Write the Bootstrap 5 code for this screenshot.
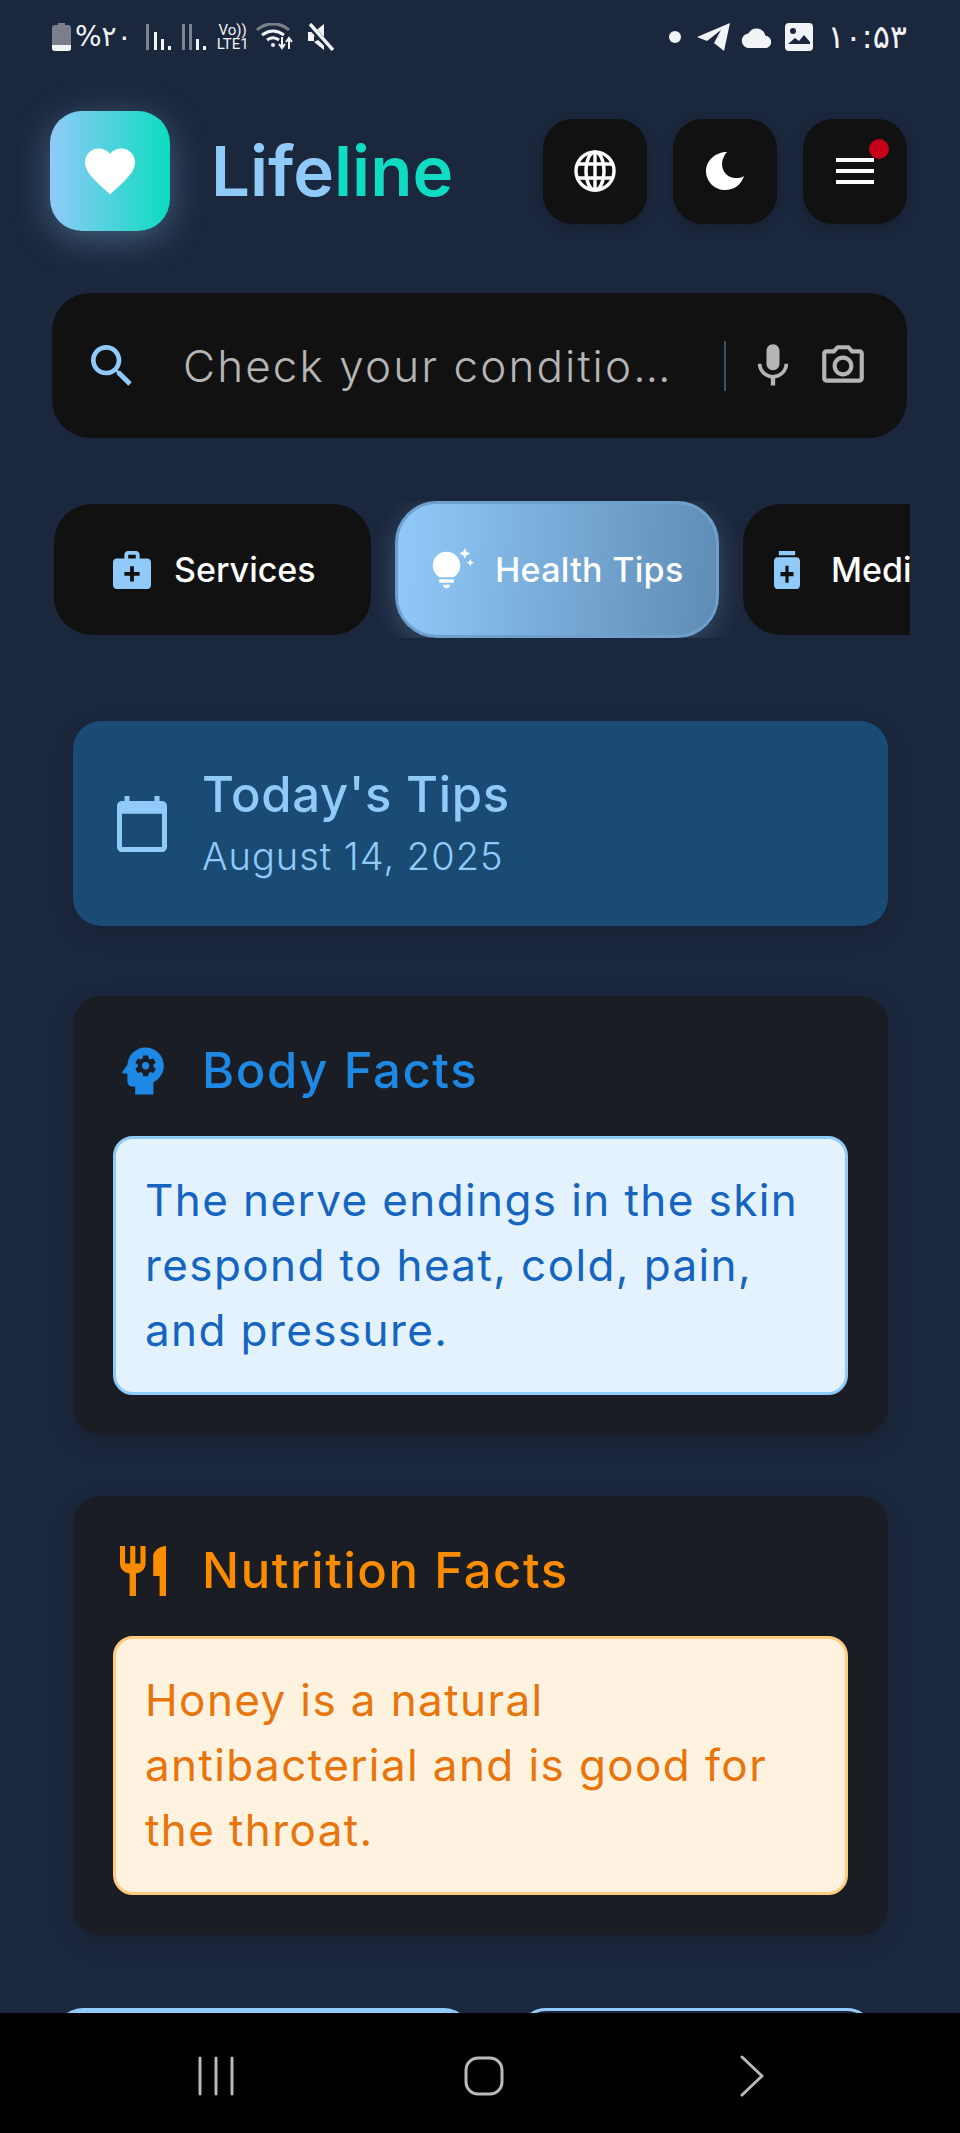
<!DOCTYPE html>
<html lang="en">
<head>
  <meta charset="UTF-8" />
  <title>Lifeline - Health Tips</title>
  <link href="https://cdn.jsdelivr.net/npm/bootstrap@5.3.0/dist/css/bootstrap.min.css" rel="stylesheet">
  <style>
    html, body { height: 100%; }
    body {
      background: #1b273d;
      font-family: Inter, "Liberation Sans", sans-serif;
      overflow: hidden;
    }
    svg { display: block; flex: none; }
    .app-shell { height: 100vh; }
    .app-main { min-height: 0; overflow: hidden; }

    .status-row { height: 30px; margin: 22px 53px 0 52px; color: #f1f3f6; }
    .status-num { font-family: "DejaVu Sans", "Noto Sans", sans-serif; font-size: 28px; line-height: 30px; white-space: nowrap; }
    .status-time { font-size: 32px; margin-left: 14px; }
    .status-pct { margin-left: 4px; }
    .status-lte { font-size: 15px; line-height: 14px; text-align: center; width: 36px; margin-left: 8px; font-family: Roboto, sans-serif; }
    .sig-one { margin-left: 14px; }
    .sig-two { margin-left: 11px; }
    .wifi-icon { margin-left: 5px; }
    .mute-icon { margin-left: 12px; }
    .plane-icon { margin-left: 16px; }
    .cloud-icon { margin-left: 10px; }
    .photo-icon { margin-left: 12px; }

    .top-row { margin: 59px 53px 0 50px; height: 120px; }
    .logo-box {
      width: 120px; height: 120px; border-radius: 32px;
      background: linear-gradient(90deg, #90caf9, #0cdcc0);
      box-shadow: 0 8px 36px rgba(144, 202, 249, .35);
    }
    .logo-text { font-size: 69px; font-weight: 600; line-height: 1; margin-left: 41px; color: #90caf9; }
    .logo-text span { color: #0fdcc2; }
    .tool-group { gap: 26px; }
    .round-tool {
      width: 104px; height: 105px; border: 0; border-radius: 30px; padding: 0;
      background: #111; box-shadow: 0 4px 14px rgba(0, 0, 0, .2);
    }
    .round-tool:hover, .round-tool:active { background: #111 !important; }
    .alert-dot { width: 20px; height: 20px; background: #c4001d; top: 20px; right: 18px; }

    .search-bar {
      margin: 62px 53px 0 52px; height: 145px; border-radius: 38px;
      background: #111; padding: 0 39px 0 32px;
    }
    .search-input {
      background: transparent !important; border: 0; box-shadow: none !important; padding: 0;
      min-width: 0; margin-left: 43px; font-size: 44px; color: #b5b5b5; letter-spacing: 2.1px; font-weight: 300;
    }
    .search-input::placeholder { color: #b5b5b5; opacity: 1; }
    .search-split { width: 2px; height: 50px; background: #3a5068; margin-right: 21px; flex: none; }
    .mic-icon { margin-right: 19px; }

    .tab-strip { margin: 63px 50px 0 52px; height: 137px; overflow: hidden; padding-left: 2px; gap: 24px; }
    .tab-item {
      height: 131px; border-radius: 38px; background: #111; color: #fff;
      font-size: 34px; font-weight: 500; flex: none; white-space: nowrap;
    }
    .tab-services { width: 317px; padding-left: 59px; gap: 23px; }
    .tab-tips {
      width: 324px; height: 137px; padding-left: 32px; gap: 21px; letter-spacing: .3px;
      background: linear-gradient(95deg, #90caf9, #5f8cb5);
      border: 3px solid #6f9fcc; border-radius: 42px;
      box-shadow: 0 6px 26px rgba(144, 202, 249, .25);
    }
    .tab-meds { width: 300px; padding-left: 31px; gap: 31px; }

    .today-card {
      margin: 83px 72px 0 73px; height: 205px; border-radius: 28px; border: 0;
      background: #1a4b75; color: #90caf9; padding: 0 44px;
      box-shadow: 0 8px 24px rgba(0, 0, 0, .12);
    }
    .today-icon { margin-right: 35px; }
    .today-title { font-size: 49px; font-weight: 500; line-height: 56px; letter-spacing: .75px; }
    .today-date { font-size: 38px; font-weight: 300; line-height: 50px; letter-spacing: 1px; margin-top: 8px; }

    .fact-card {
      margin: 0 72px 0 73px; height: 439px; border-radius: 28px; border: 0;
      background: #1a1d23; padding: 40px;
      box-shadow: 0 8px 24px rgba(0, 0, 0, .15);
    }
    .fact-card.fact-blue { margin-top: 70px; }
    .fact-card.fact-orange { margin-top: 61px; }
    .fact-head { height: 60px; margin-top: 5px; margin-bottom: 35px; font-size: 49px; font-weight: 500; letter-spacing: 1.6px; }
    .fact-icon { width: 59px; margin-right: 30px; }
    .fact-box {
      height: 259px; border-radius: 20px; border-width: 3px; border-style: solid;
      padding: 0 29px; font-size: 44px; line-height: 65px; letter-spacing: 1.4px;
    }
    .fact-blue .fact-head { color: #1e88e5; }
    .fact-blue .fact-box { background: #e3f2fd; border-color: #90caf9; color: #1565c0; }
    .fact-orange .fact-head { color: #fb8c00; }
    .fact-orange .fact-box { background: #fff3e0; border-color: #ffcc80; color: #e8750c; }

    .peek-row { margin: 73px 85px 0 55px; }
    .peek-btn { height: 120px; border-radius: 28px; flex: none; }
    .peek-fill { width: 417px; background: #90caf9; }
    .peek-line { width: 357px; border: 3px solid #90caf9; }

    .soft-bar { height: 120px; background: #000; flex: none; padding-top: 6px; padding-left: 8px; }
    .soft-slot { width: 268px; }
  </style>
</head>
<body>
  <div class="app-shell d-flex flex-column">
    <div class="app-main flex-grow-1">

      <!-- status bar -->
      <div class="status-row d-flex align-items-center justify-content-between">
        <div class="d-flex align-items-center">
          <svg width="19" height="28" viewBox="0 0 19 28"><path d="M6 0h7v2h3a3 3 0 0 1 3 3v20a3 3 0 0 1-3 3H3a3 3 0 0 1-3-3V5a3 3 0 0 1 3-3h3z" fill="#7b7f8b"/><path d="M0 22h19v3a3 3 0 0 1-3 3H3a3 3 0 0 1-3-3z" fill="#f4f5f7"/></svg>
          <span class="status-num status-pct">%۲۰</span>
          <svg class="sig-one" width="25" height="26" viewBox="0 0 25 26"><g fill="#f1f3f6"><rect x="0" y="0" width="3" height="26" opacity=".45"/><rect x="8" y="8" width="3" height="18"/><rect x="15" y="15" width="3" height="11"/><rect x="22" y="22" width="3" height="4"/></g></svg>
          <svg class="sig-two" width="25" height="26" viewBox="0 0 25 26"><g fill="#f1f3f6"><rect x="0" y="0" width="3" height="26" opacity=".45"/><rect x="7" y="0" width="3" height="26" opacity=".45"/><rect x="14" y="15" width="3" height="11"/><rect x="21" y="22" width="3" height="4"/></g></svg>
          <div class="status-lte">Vo))<br>LTE1</div>
          <svg class="wifi-icon" width="38" height="28" viewBox="0 0 38 28" fill="none"><path d="M1 7C10-1 24-1 33 7" stroke="#7b7f8b" stroke-width="3"/><path d="M6 12c7-5 15-5 22 0" stroke="#f1f3f6" stroke-width="3"/><path d="M11 17c4-3 8-3 12 0" stroke="#f1f3f6" stroke-width="3"/><circle cx="17" cy="22" r="2" fill="#f1f3f6"/><path d="M26 14v11m-3-4 3 4 3-4M33 26V15m-3 4 3-4 3 4" stroke="#f1f3f6" stroke-width="2"/></svg>
          <svg class="mute-icon" width="28" height="28" viewBox="0 0 28 28"><path d="M2 9h6l10-8v17z" fill="#f1f3f6"/><path d="M2 9h6v9H2z" fill="#f1f3f6"/><path d="M12 17l6 5v5l-10-8z" fill="#f1f3f6"/><path d="M3 2l23 25" stroke="#1b273d" stroke-width="6"/><path d="M4 1l23 26" stroke="#f1f3f6" stroke-width="3.4"/></svg>
        </div>
        <div class="d-flex align-items-center">
          <svg width="12" height="12" viewBox="0 0 12 12"><circle cx="6" cy="6" r="6" fill="#f1f3f6"/></svg>
          <svg class="plane-icon" width="33" height="28" viewBox="0 0 33 28"><path d="M0 14 33 0 27 28 17 20 24 7 10 18z" fill="#f1f3f6"/></svg>
          <svg class="cloud-icon" width="33" height="22" viewBox="0 2 24 18"><path fill="#f1f3f6" d="M19.35 10.04C18.67 6.59 15.64 4 12 4 9.11 4 6.6 5.64 5.35 8.04 2.34 8.36 0 10.91 0 14c0 3.31 2.69 6 6 6h13c2.76 0 5-2.24 5-5 0-2.64-2.05-4.78-4.65-4.96z"/></svg>
          <svg class="photo-icon" width="28" height="28" viewBox="0 0 28 28"><rect width="28" height="28" rx="4" fill="#f1f3f6"/><circle cx="8" cy="8" r="3" fill="#1b273d"/><path d="M3 21l7-6 4 3 5-6 6 7v2H3z" fill="#1b273d"/></svg>
          <span class="status-num status-time">۱۰:۵۳</span>
        </div>
      </div>

      <!-- logo + tools -->
      <div class="top-row d-flex align-items-center">
        <div class="logo-box d-flex align-items-center justify-content-center">
          <svg width="60" height="60" viewBox="0 0 24 24"><path fill="#fff" d="M12 21.35l-1.45-1.32C5.4 15.36 2 12.28 2 8.5 2 5.42 4.42 3 7.5 3c1.74 0 3.41.81 4.5 2.09C13.09 3.81 14.76 3 16.5 3 19.58 3 22 5.42 22 8.5c0 3.78-3.4 6.86-8.55 11.54L12 21.35z"/></svg>
        </div>
        <div class="logo-text">Life<span>line</span></div>
        <div class="tool-group d-flex ms-auto">
          <button class="btn round-tool d-flex align-items-center justify-content-center">
            <svg width="42" height="42" viewBox="0 0 42 42" fill="none" stroke="#fff" stroke-width="3.4"><circle cx="21" cy="21" r="19"/><ellipse cx="21" cy="21" rx="9" ry="19"/><path d="M21 2v38M3 14h36M3 28h36"/></svg>
          </button>
          <button class="btn round-tool d-flex align-items-center justify-content-center">
            <svg width="38" height="38" viewBox="0 0 38 38"><path fill="#fff" d="M21 0C10 0 0 8 0 19s9 19 19 19c9 0 16-5 19-14-3 2-5 2-8 2-8 0-14-6-14-14 0-4 2-9 5-12z"/></svg>
          </button>
          <button class="btn round-tool d-flex align-items-center justify-content-center position-relative">
            <svg width="38" height="26" viewBox="0 0 38 26"><path fill="#fff" d="M0 0h38v4H0zM0 11h38v4H0zM0 22h38v4H0z"/></svg>
            <span class="alert-dot position-absolute rounded-circle"></span>
          </button>
        </div>
      </div>

      <!-- search -->
      <div class="search-bar d-flex align-items-center">
        <svg width="56" height="56" viewBox="0 0 24 24"><path fill="#90caf9" d="M15.5 14h-.79l-.28-.27C15.41 12.59 16 11.11 16 9.5 16 5.91 13.09 3 9.5 3S3 5.91 3 9.5 5.91 16 9.5 16c1.61 0 3.09-.59 4.23-1.57l.27.28v.79l5 4.99L20.49 19l-4.99-5zm-6 0C7.01 14 5 11.99 5 9.5S7.01 5 9.5 5 14 7.01 14 9.5 11.99 14 9.5 14z"/></svg>
        <input class="form-control search-input flex-grow-1" placeholder="Check your conditio…" />
        <div class="search-split"></div>
        <svg width="52" height="52" viewBox="0 0 24 24" class="mic-icon"><path fill="#b5b5b5" d="M12 14c1.66 0 3-1.34 3-3V5c0-1.66-1.34-3-3-3S9 3.34 9 5v6c0 1.66 1.34 3 3 3zm5.3-3c0 3-2.54 5.1-5.3 5.1S6.7 14 6.7 11H5c0 3.41 2.72 6.23 6 6.72V21h2v-3.28c3.28-.48 6-3.3 6-6.72h-1.7z"/></svg>
        <svg width="50" height="50" viewBox="0 0 24 24"><path fill="#b5b5b5" d="M20 4h-3.17L15 2H9L7.17 4H4c-1.1 0-2 .9-2 2v12c0 1.1.9 2 2 2h16c1.1 0 2-.9 2-2V6c0-1.1-.9-2-2-2zm0 14H4V6h4.05l1.83-2h4.24l1.83 2H20v12zM12 7c-2.76 0-5 2.24-5 5s2.24 5 5 5 5-2.24 5-5-2.24-5-5-5zm0 8c-1.65 0-3-1.35-3-3s1.35-3 3-3 3 1.35 3 3-1.35 3-3 3z"/></svg>
      </div>

      <!-- tabs -->
      <div class="tab-strip d-flex align-items-center">
        <div class="tab-item tab-services d-flex align-items-center">
          <svg width="38" height="40" viewBox="2 2 20 20"><path fill="#90caf9" d="M20 6h-4V4c0-1.1-.9-2-2-2h-4c-1.1 0-2 .9-2 2v2H4c-1.1 0-2 .9-2 2v12c0 1.1.9 2 2 2h16c1.1 0 2-.9 2-2V8c0-1.1-.9-2-2-2zM10 4h4v2h-4V4zm6 11h-3v3h-2v-3H8v-2h3v-3h2v3h3v2z"/></svg>
          <span>Services</span>
        </div>
        <div class="tab-item tab-tips d-flex align-items-center">
          <svg width="44" height="44" viewBox="0 0 24 24"><path fill="#fff" d="M7 20h4c0 1.1-.9 2-2 2s-2-.9-2-2zm-2-1h8v-2H5v2zm11.5-9.5c0 3.82-2.66 5.86-3.77 6.5H5.27C4.16 15.36 1.5 13.32 1.5 9.5 1.5 5.36 4.86 2 9 2s7.5 3.36 7.5 7.5zm4.87-2.13L20 8l1.37.63L22 10l.63-1.37L24 8l-1.37-.63L22 6l-.63 1.37zM19 6l.94-2.06L22 3l-2.06-.94L19 0l-.94 2.06L16 3l2.06.94L19 6z"/></svg>
          <span>Health Tips</span>
        </div>
        <div class="tab-item tab-meds d-flex align-items-center">
          <svg width="26" height="38" viewBox="4 3 16 18" preserveAspectRatio="none"><path fill="#90caf9" d="M17 3H7v2h10V3zm1 3H6c-1.1 0-2 .9-2 2v11c0 1.1.9 2 2 2h12c1.1 0 2-.9 2-2V8c0-1.1-.9-2-2-2zm-2 9h-3v3h-2v-3H8v-2h3v-3h2v3h3v2z"/></svg>
          <span>Medication</span>
        </div>
      </div>

      <!-- today's tips -->
      <div class="card today-card flex-row align-items-center">
        <svg width="50" height="56" viewBox="2 1 20 22" preserveAspectRatio="none" class="today-icon"><path fill="#90caf9" d="M20 3h-1V1h-2v2H7V1H5v2H4c-1.1 0-2 .9-2 2v16c0 1.1.9 2 2 2h16c1.1 0 2-.9 2-2V5c0-1.1-.9-2-2-2zm0 18H4V8h16v13z"/></svg>
        <div>
          <div class="today-title">Today's Tips</div>
          <div class="today-date">August 14, 2025</div>
        </div>
      </div>

      <!-- body facts -->
      <div class="card fact-card fact-blue">
        <div class="fact-head d-flex align-items-center">
          <div class="fact-icon d-flex justify-content-center">
            <svg width="52" height="52" viewBox="3 2 18 20"><path fill="#1e88e5" d="M13 8.57c-.79 0-1.43.64-1.43 1.43s.64 1.43 1.43 1.43 1.43-.64 1.43-1.43-.64-1.43-1.43-1.43z"/><path fill="#1e88e5" d="M13 3C9.25 3 6.2 5.94 6.02 9.64L4.1 12.2c-.25.33-.01.8.4.8H6v3c0 1.1.9 2 2 2h1v3h7v-4.68c2.36-1.12 4-3.53 4-6.32 0-3.87-3.13-7-7-7zm3 7c0 .13-.01.26-.02.39l.83.66c.08.06.1.16.05.25l-.8 1.39c-.05.09-.16.12-.24.09l-.99-.4c-.21.16-.43.29-.67.39L14 13.83c-.01.1-.1.17-.2.17h-1.6c-.1 0-.18-.07-.2-.17l-.15-1.06c-.25-.1-.47-.23-.68-.39l-.99.4c-.09.03-.2 0-.25-.09l-.8-1.39c-.05-.08-.03-.19.05-.25l.84-.66c-.01-.13-.02-.26-.02-.39 0-.13.02-.27.04-.39l-.85-.66c-.08-.06-.1-.16-.05-.26l.8-1.38c.05-.09.15-.12.24-.09l1 .4c.2-.15.43-.29.67-.39L12 6.17c.02-.1.1-.17.2-.17h1.6c.1 0 .18.07.2.17l.15 1.06c.24.1.46.23.67.39l1-.4c.09-.03.2 0 .24.09l.8 1.38c.05.09.03.2-.05.26l-.85.66c.03.12.04.25.04.39z"/></svg>
          </div>
          <span>Body Facts</span>
        </div>
        <div class="fact-box d-flex align-items-center">The nerve endings in the skin respond to heat, cold, pain, and pressure.</div>
      </div>

      <!-- nutrition facts -->
      <div class="card fact-card fact-orange">
        <div class="fact-head d-flex align-items-center">
          <div class="fact-icon d-flex justify-content-center">
            <svg width="46" height="50" viewBox="3 2 18 20" preserveAspectRatio="none"><path fill="#fb8c00" d="M11 9H9V2H7v7H5V2H3v7c0 2.12 1.66 3.84 3.75 3.97V22h2.5v-9.03C11.34 12.84 13 11.12 13 9V2h-2v7zm5-3v8h2.5v8H21V2c-2.76 0-5 2.24-5 4z"/></svg>
          </div>
          <span>Nutrition Facts</span>
        </div>
        <div class="fact-box d-flex align-items-center">Honey is a natural antibacterial and is good for the throat.</div>
      </div>

      <!-- buttons cut off by the nav bar -->
      <div class="peek-row d-flex justify-content-between">
        <div class="peek-btn peek-fill"></div>
        <div class="peek-btn peek-line"></div>
      </div>
    </div>

    <!-- android nav bar -->
    <div class="soft-bar d-flex align-items-center justify-content-center">
      <div class="soft-slot d-flex justify-content-center">
        <svg width="38" height="40" viewBox="0 0 38 40"><path d="M3 2v36M19 2v36M35 2v36" stroke="#b9b9b9" stroke-width="3" stroke-linecap="round"/></svg>
      </div>
      <div class="soft-slot d-flex justify-content-center">
        <svg width="40" height="40" viewBox="0 0 40 40"><rect x="2" y="2" width="36" height="36" rx="12" fill="none" stroke="#b9b9b9" stroke-width="3"/></svg>
      </div>
      <div class="soft-slot d-flex justify-content-center">
        <svg width="24" height="42" viewBox="0 0 24 42"><path d="M2 2l20 19L2 40" fill="none" stroke="#b9b9b9" stroke-width="3" stroke-linecap="round" stroke-linejoin="round"/></svg>
      </div>
    </div>
  </div>

  <script src="https://cdn.jsdelivr.net/npm/bootstrap@5.3.0/dist/js/bootstrap.bundle.min.js"></script>
</body>
</html>
